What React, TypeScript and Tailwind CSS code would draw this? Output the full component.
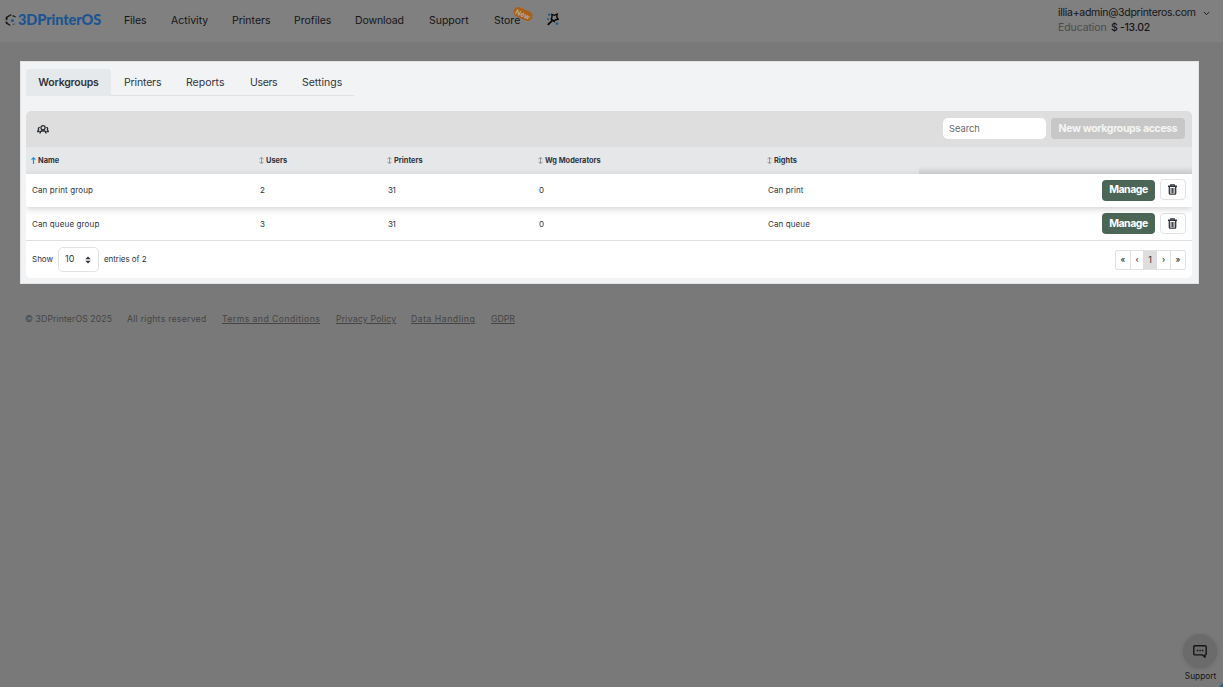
import React from "react";
import { ChevronDown } from "lucide-react";

const navItems = [
  { label: "Files", cls: "w-[47px] tracking-[-0.1px]" },
  { label: "Activity", cls: "w-[61px]" },
  { label: "Printers", cls: "w-[62px]" },
  { label: "Profiles", cls: "w-[61px]" },
  { label: "Download", cls: "w-[74px] tracking-[-0.12px]" },
  { label: "Support", cls: "w-[65px]" },
];

const tabs = [
  { label: "Printers", cls: "w-[62px] tracking-[-0.15px]" },
  { label: "Reports", cls: "w-[64px]" },
  { label: "Users", cls: "w-[52px] tracking-[-0.35px]" },
  { label: "Settings", cls: "w-[52px]" },
];

const rows = [
  { name: "Can print group", users: "2", printers: "31", moderators: "0", rights: "Can print" },
  { name: "Can queue group", users: "3", printers: "31", moderators: "0", rights: "Can queue" },
];

function Logo() {
  return (
    <svg width="12" height="14" viewBox="0 0 12 14" fill="none">
      <path d="M5.6 1.2 7 1.9 2.6 4.6v2L.7 7.6V4Z" fill="#1a1a1a" />
      <path d="M.7 8.2 2.6 9v1l2.6 1.5V13L.7 10.4Z" fill="#1a1a1a" />
      <path d="m8 1.9 2.8 1.7v1L7.2 3.2Z" fill="#1a1a1a" />
      <circle cx="7.4" cy="7.4" r="1.5" fill="#1b5490" />
      <path d="M7.6 11.9 10 10.6" stroke="#444" strokeWidth="0.9" />
    </svg>
  );
}

function Wand() {
  return (
    <svg width="12" height="13" viewBox="0 0 12 13" fill="none">
      <path d="M.8 11.9 5.4 7.3" stroke="#080808" strokeWidth="1.9" />
      <path d="m4.9 1.4 2.5.9 2.8-1.2-.4 2.8 1.4 2.4-2.7.4-1.3 1.9-1.7-1.9-1.3-.6.8-2Z" stroke="#080808" strokeWidth="1.4" />
      <path d="M2.2.6v2.2M1.1 1.7h2.2M.1 6.2h1.8M1 5.3v1.8M9.9 9.4v2.6M8.6 10.7h2.6" stroke="#12568a" strokeWidth="1.2" />
    </svg>
  );
}

function Group() {
  return (
    <svg width="12" height="9" viewBox="0 0 12 9" fill="none" stroke="#282b30" strokeWidth="1.3">
      <circle cx="6" cy="2.8" r="2.1" />
      <path d="M2.9 8.5C3.3 4.8 8.7 4.8 9.1 8.5" />
      <path d="M2.8 2.3C.8 2.4 1 4.6 2.2 4.8.9 5 .7 5.8.7 6.6h2M9.2 2.3c2 .1 1.8 2.3.6 2.5 1.3.2 1.5 1 1.5 1.8h-2" />
    </svg>
  );
}

function Trash() {
  return (
    <svg width="9" height="11" viewBox="0 0 9 11" fill="none" stroke="#30333d">
      <path d="M0 2.3h9" strokeWidth="1.5" />
      <path d="M2.8 2V.8h3.4V2M1.3 3v6.2q0 .9.9.9h4.6q.9 0 .9-.9V3" strokeWidth="1.3" />
      <path d="M3.1 4v5M4.5 4v5M5.9 4v5" strokeWidth="0.9" />
    </svg>
  );
}

function SortIcon() {
  return (
    <svg width="5" height="7" viewBox="0 0 5 7" fill="none" stroke="#8b8d92" strokeWidth="0.9">
      <path d="M2.5 1v5M.5 1.9 2.5.5l2 1.4M.5 5.1l2 1.4 2-1.4" />
    </svg>
  );
}

function Heading({ label, cls }: { label: string; cls: string }) {
  return (
    <div className={`flex items-center gap-[2px] ${cls}`}>
      <SortIcon />
      <span>{label}</span>
    </div>
  );
}

export default function App() {
  return (
    <div className="flex h-[687px] w-[1223px] flex-col overflow-hidden bg-[#797979] font-['Inter',sans-serif] text-[#151515]">
      <header className="flex h-[42px] shrink-0 bg-[#808080]">
        <div className="flex h-10 w-[124px] items-center gap-px pl-[5px]">
          <Logo />
          <span className="font-['Lato',sans-serif] text-[14.5px] font-black tracking-[-0.1px] text-[#1b5490]">3DPrinterOS</span>
        </div>
        <nav className="flex h-[41px] items-center text-[10.5px]">
          {navItems.map((n) => (
            <a key={n.label} className={n.cls}>{n.label}</a>
          ))}
          <a className="relative w-[53px]">
            Store
            <span className="absolute -top-[4px] left-[19px] flex h-[10px] w-[20px] rotate-[24deg] items-center justify-center rounded-full bg-[#a8611a] text-[7px] font-semibold leading-none text-[#b8b0a6]">New</span>
          </a>
          <div className="-mt-[2px]"><Wand /></div>
        </nav>
        <div className="ml-auto w-[165px] pt-[6px] text-[10.5px] leading-[14.5px]">
          <div className="flex items-center">
            <span className="w-[144px] whitespace-nowrap tracking-[-0.28px]">illia+admin@3dprinteros.com</span>
            <ChevronDown size={9} strokeWidth={2.5} />
          </div>
          <div className="flex">
            <span className="w-[53px] tracking-[-0.1px] text-[#4b4b4b]">Education</span>
            <span className="font-medium tracking-[-0.3px]">$ -13.02</span>
          </div>
        </div>
      </header>

      <main className="ml-[20px] mt-[19px] h-[223px] w-[1179px] shrink-0 border border-[#e2e3e4] bg-[#f2f3f5] pl-[5px] pt-[7px] text-[#30333b]">
        <div className="flex h-[27px] w-[328px] items-center border-b border-[#dfe1e3] text-[10.5px]">
          <div className="flex h-[27px] w-[85px] items-center justify-center rounded-t-[3px] bg-[#e6e9eb] pt-px font-semibold tracking-[-0.2px]">Workgroups</div>
          <div className="flex pl-[13px] pt-px">
            {tabs.map((t) => (
              <div key={t.label} className={t.cls}>{t.label}</div>
            ))}
          </div>
        </div>

        <section className="mt-[15px] flex h-[167px] w-[1166px] flex-col overflow-hidden rounded-[5px] bg-white text-[8px]">
          <div className="flex h-[36px] shrink-0 items-center bg-[#dedede] pl-[11px] pr-[7px]">
            <div className="pt-px"><Group /></div>
            <input placeholder="Search" className="mb-px ml-auto h-[21px] w-[103px] rounded-[5px] bg-white px-[6px] text-[9.3px] outline-none placeholder:text-[#686868]" />
            <button className="mb-px ml-[5px] h-[21px] w-[134px] rounded-[4px] bg-[#c7c7c7] text-[10.5px] font-bold tracking-[-0.35px] text-[#f5f5f5]">New workgroups access</button>
          </div>
          <div className="flex h-[27px] shrink-0 items-center bg-[#e6e7e9] text-[7.4px] font-bold">
            <div className="flex w-[233px] items-center gap-[2px] pl-[5px]">
              <svg width="5" height="7" viewBox="0 0 5 7" fill="none" stroke="#159bce" strokeWidth="1.2"><path d="M2.5 7V1M.5 2.7l2-2 2 2" /></svg>
              <span>Name</span>
            </div>
            <Heading label="Users" cls="w-[128px]" />
            <Heading label="Printers" cls="w-[151px]" />
            <Heading label="Wg Moderators" cls="w-[229px]" />
            <Heading label="Rights" cls="w-[152px]" />
            <div className="h-[27px] w-[273px] bg-linear-to-t from-[#cfd0d2] to-[#e6e7e9] to-30%" />
          </div>
          {rows.map((r, i) => (
            <div key={r.name} className={i === 0 ? "relative flex h-[33px] shrink-0 items-center bg-white pb-px shadow-[0_2px_7px_rgba(0,0,0,0.18)]" : "flex h-[34px] shrink-0 items-center border-b border-[#dedfe1]"}>
              <span className="w-[234px] pl-[6px] tracking-[0.13px]">{r.name}</span>
              <span className="w-[128px]">{r.users}</span>
              <span className="w-[151px] tracking-[-0.5px]">{r.printers}</span>
              <span className="w-[229px]">{r.moderators}</span>
              <span className="tracking-[0.1px]">{r.rights}</span>
              <button className="ml-auto h-[21px] w-[53px] rounded-[4px] bg-[#4b6657] text-[10.5px] font-bold tracking-[-0.45px] text-white">Manage</button>
              <button className="mb-px ml-[5px] mr-[6px] flex h-[21px] w-[26px] items-center justify-center rounded-[4px] border border-[#e1e2e4] pr-px"><Trash /></button>
            </div>
          ))}
          <div className="flex h-[37px] items-center pl-[6px] pr-[6px]">
            <span className="w-[26px] pb-px">Show</span>
            <div className="flex h-[25px] w-[41px] items-center justify-between rounded-[5px] border border-[#e1e2e4] pl-[6px] pr-[7px] text-[9px]">
              <span className="pb-px">10</span>
              <svg width="6" height="8" viewBox="0 0 6 8" fill="#30333b"><path d="m3 .5 2.7 2.8H.3ZM3 7.5.3 4.7h5.4Z" /></svg>
            </div>
            <span className="ml-[5px] pb-px tracking-[-0.05px]">entries of 2</span>
            <div className="ml-auto flex h-[20px] w-[71px] rounded-[2px] border border-[#e1e2e4] text-center font-medium leading-[17px]">
              <span className="w-[14px]">«</span>
              <span className="w-[13px] border-l border-[#e1e2e4]">‹</span>
              <span className="w-[14px] bg-[#dedede] text-[9px] font-normal">1</span>
              <span className="w-[13px]">›</span>
              <span className="w-[15px] border-l border-[#e1e2e4]">»</span>
            </div>
          </div>
        </section>
      </main>

      <footer className="ml-[25px] mt-[29px] flex h-3 items-center whitespace-nowrap text-[8.7px] leading-3 text-[#454545]">
        <span className="w-[102px] tracking-[0.1px]">© 3DPrinterOS 2025</span>
        <span className="w-[95px] tracking-[0.25px]">All rights reserved</span>
        <a className="w-[114px] tracking-[0.42px] underline underline-offset-1">Terms and Conditions</a>
        <a className="w-[75px] tracking-[0.2px] underline underline-offset-1">Privacy Policy</a>
        <a className="w-[80px] tracking-[0.5px] underline underline-offset-1">Data Handling</a>
        <a className="underline underline-offset-1">GDPR</a>
      </footer>

      <div className="relative mt-auto flex h-[53px] w-[46px] flex-col items-center self-end">
        <div className="flex h-[34px] w-[34px] shrink-0 items-center justify-center rounded-full bg-[#6b6b6b] shadow-[0_1px_5px_rgba(0,0,0,0.12)]">
          <svg width="14" height="13" viewBox="0 0 14 13" fill="none" stroke="#151515" strokeWidth="1.4">
            <path d="M2 .8h10q1.2 0 1.2 1.2v6.7q0 1.2-1.2 1.2v2.3L9.5 9.9H2Q.8 9.9.8 8.7V2Q.8.8 2 .8Z" />
            <path d="M3.8 5.5h1.5M6.3 5.5h1.5M8.8 5.5h1.5" />
          </svg>
        </div>
        <span className="ml-px mt-[2px] text-[8.3px] leading-[13px]">Support</span>
        <svg className="absolute bottom-0 right-0" width="4" height="4" viewBox="0 0 4 4"><path d="M4 0v4H0Z" fill="#1b659f" /></svg>
      </div>
    </div>
  );
}
